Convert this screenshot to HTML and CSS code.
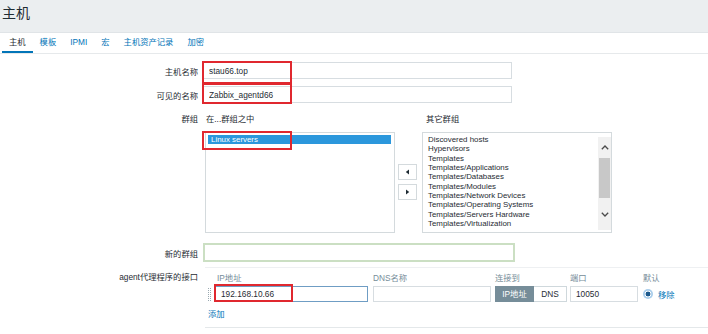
FILE: index.html
```html
<!DOCTYPE html>
<html lang="zh">
<head>
<meta charset="utf-8">
<title>主机</title>
<link rel="stylesheet" href="styles.css">
</head>
<body>
<div class="title-bar"><h1>主机</h1></div>
<nav class="tabs">
  <a class="tab active">主机</a><a class="tab">模板</a><a class="tab">IPMI</a><a class="tab">宏</a><a class="tab">主机资产记录</a><a class="tab">加密</a>
</nav>
<form class="form">
  <div class="row row-host">
    <label class="lbl">主机名称</label>
    <div class="field">
      <input class="txt w-name" type="text" value="stau66.top">
      <span class="mark mark-host"></span>
    </div>
  </div>
  <div class="row row-visible">
    <label class="lbl">可见的名称</label>
    <div class="field">
      <input class="txt w-name" type="text" value="Zabbix_agentd66">
      <span class="mark mark-visible"></span>
    </div>
  </div>
  <div class="row row-groups">
    <label class="lbl lbl-top">群组</label>
    <div class="groups">
      <div class="gcol gcol-in">
        <div class="ghead">在...群组之中</div>
        <div class="listbox">
          <div class="items">
            <div class="opt selected">Linux servers</div>
          </div>
          <span class="mark mark-group"></span>
        </div>
      </div>
      <div class="movers">
        <button type="button" class="mv"><svg width="5" height="6" viewBox="0 0 5 6"><path d="M4 0.5 L0.8 3 L4 5.5 Z" fill="#1f2c33"/></svg></button>
        <button type="button" class="mv"><svg width="5" height="6" viewBox="0 0 5 6"><path d="M1 0.5 L4.2 3 L1 5.5 Z" fill="#1f2c33"/></svg></button>
      </div>
      <div class="gcol gcol-other">
        <div class="ghead ghead-other">其它群组</div>
        <div class="listbox">
          <div class="items">
            <div class="opt">Discovered hosts</div>
            <div class="opt">Hypervisors</div>
            <div class="opt">Templates</div>
            <div class="opt">Templates/Applications</div>
            <div class="opt">Templates/Databases</div>
            <div class="opt">Templates/Modules</div>
            <div class="opt">Templates/Network Devices</div>
            <div class="opt">Templates/Operating Systems</div>
            <div class="opt">Templates/Servers Hardware</div>
            <div class="opt">Templates/Virtualization</div>
          </div>
          <div class="sbar">
            <div class="sb-up"><svg width="8" height="5" viewBox="0 0 8 5"><path d="M0.8 4.3 L4 1 L7.2 4.3" fill="none" stroke="#4a4a4a" stroke-width="1.3"/></svg></div>
            <div class="sb-thumb"></div>
            <div class="sb-down"><svg width="8" height="5" viewBox="0 0 8 5"><path d="M0.8 0.7 L4 4 L7.2 0.7" fill="none" stroke="#4a4a4a" stroke-width="1.3"/></svg></div>
          </div>
        </div>
      </div>
    </div>
  </div>
  <div class="row row-new">
    <label class="lbl">新的群组</label>
    <div class="field">
      <input class="txt newgroup" type="text" value="">
    </div>
  </div>
  <div class="row row-iface">
    <label class="lbl lbl-top lbl-iface">agent代理程序的接口</label>
    <div class="iface">
      <div class="if-head">
        <span class="c-handle"></span>
        <span class="c-ip">IP地址</span>
        <span class="c-dns">DNS名称</span>
        <span class="c-conn">连接到</span>
        <span class="c-port">端口</span>
        <span class="c-def">默认</span>
      </div>
      <div class="if-row">
        <span class="c-handle"><span class="drag"></span></span>
        <span class="c-ip field">
          <input class="txt if-input ip-input" type="text" value="192.168.10.66">
          <span class="mark mark-ip"></span>
        </span>
        <span class="c-dns"><input class="txt if-input" type="text" value=""></span>
        <span class="c-conn seg">
          <span class="seg-btn on">IP地址</span><span class="seg-btn">DNS</span>
        </span>
        <span class="c-port"><input class="txt if-input" type="text" value="10050"></span>
        <span class="c-def def-cell">
          <span class="radio"></span>
          <a class="link">移除</a>
        </span>
      </div>
      <div class="if-add"><a class="link">添加</a></div>
    </div>
  </div>
</form>
</body>
</html>
```

FILE: styles.css
```css
* { box-sizing: border-box; }

html, body {
  margin: 0;
  padding: 0;
  background: #ffffff;
}

body {
  width: 708px;
  height: 334px;
  overflow: hidden;
  font-family: "Liberation Sans", Arial, "Noto Sans CJK SC", sans-serif;
  font-size: 8.3px;
  color: #1f2c33;
}

.title-bar {
  height: 33px;
  background: #ebeef0;
  border-bottom: 1px solid #e0e4e7;
}

.title-bar h1 {
  margin: 0;
  padding: 5px 0 0 2px;
  font-size: 14px;
  line-height: 16px;
  font-weight: normal;
  color: #1f2c33;
}

.tabs {
  display: flex;
  height: 21px;
  padding-left: 2px;
  border-bottom: 1px solid #e6e9eb;
}

.tab {
  display: block;
  height: 20px;
  padding: 1px 7px 0;
  line-height: 17px;
  border-bottom: 2px solid transparent;
  color: #0275b8;
  text-decoration: none;
}

.tab.active {
  color: #1f2c33;
  border-bottom-color: #0275b8;
}

.form {
  padding-top: 8px;
}

.row {
  display: flex;
  align-items: center;
}

.row-visible { margin-top: 7px; }
.row-groups { margin-top: 9px; align-items: flex-start; }
.row-new { margin-top: 10px; }
.row-iface { margin-top: 5px; align-items: flex-start; }

.lbl {
  flex: none;
  width: 198px;
  margin-right: 5px;
  text-align: right;
  color: #1f2c33;
}

.lbl-top { line-height: 14px; }
.lbl-iface { line-height: 18px; padding-top: 1px; }

.field {
  position: relative;
  display: block;
}

.txt {
  display: block;
  margin: 0;
  height: 17px;
  padding: 0 5px;
  border: 1px solid #d7dde1;
  background: #fff;
  font-family: inherit;
  font-size: 8.3px;
  color: #1f2c33;
  outline: none;
  border-radius: 0;
}

.w-name { width: 309px; }

.newgroup {
  width: 312px;
  height: 19px;
  border: 2px solid #cbdfc3;
}

.mark {
  position: absolute;
  border: 2px solid #e0282f;
  pointer-events: none;
}

.mark-host { left: -1px; top: -1px; width: 90px; height: 23px; }
.mark-visible { left: -1px; top: -3px; width: 90px; height: 21px; }
.mark-group { left: -4px; top: -2px; width: 90px; height: 19px; }
.mark-ip { left: -1px; top: -2px; width: 79px; height: 18px; }

/* groups */
.groups {
  display: flex;
  align-items: flex-end;
}

.gcol { width: 190px; }
.gcol-in { margin-left: 2px; }

.ghead {
  line-height: 14px;
  height: 14px;
  margin-bottom: 6px;
  padding-left: 1px;
}

.ghead-other { padding-left: 4px; }

.listbox {
  position: relative;
  display: flex;
  height: 101px;
  border: 1px solid #d4dadd;
  background: #fff;
  padding: 2px 3px 2px 2px;
}

.items {
  flex: 1;
  min-width: 0;
}

.opt {
  height: 9.33px;
  line-height: 9.33px;
  padding: 0 3px;
  font-size: 7.9px;
  white-space: nowrap;
  color: #1f2c33;
}

.opt.selected {
  background: #2b97dc;
  color: #ffffff;
}

.gcol-other .listbox { padding-right: 0; }

.sbar {
  flex: none;
  width: 13px;
  margin: 2px 0 0 0;
  display: flex;
  flex-direction: column;
  background: #f1f1f1;
}

.sb-up {
  height: 21px;
  display: flex;
  align-items: center;
  justify-content: center;
}

.sb-thumb {
  height: 40px;
  margin: 0 1px;
  background: #c8c8c8;
}

.sb-down {
  flex: 1;
  display: flex;
  align-items: center;
  justify-content: center;
}

.movers {
  display: flex;
  flex-direction: column;
  gap: 4px;
  margin: 0 5px 33px 3px;
}

.mv {
  width: 19px;
  height: 16px;
  padding: 0;
  margin: 0;
  border: 1px solid #d4dadd;
  background: #ffffff;
  display: flex;
  align-items: center;
  justify-content: center;
}

/* interface */
.iface {
  flex: none;
  margin-left: 2px;
  width: 503px;
  padding: 0 0 6px 3px;
  border-top: 1px solid #eef0f2;
  border-bottom: 1px solid #e4e8ea;
}

.if-head, .if-row {
  display: flex;
  align-items: center;
}

.if-head {
  height: 18px;
  color: #768d99;
}

.if-row { height: 16px; }

.c-handle { flex: none; width: 7px; display: flex; align-items: center; }
.c-ip { flex: none; width: 153px; }
.c-dns { flex: none; width: 118px; margin-left: 5px; }
.c-conn { flex: none; width: 72px; margin-left: 4px; }
.c-port { flex: none; width: 68px; margin-left: 3px; }
.c-def { flex: none; margin-left: 5px; }

.if-head .c-ip { padding-left: 2px; }

.drag {
  display: block;
  width: 3px;
  height: 13px;
  border-left: 1px dotted #9aa9b1;
  border-right: 1px dotted #9aa9b1;
}

.if-input {
  width: 100%;
  height: 16px;
}

.ip-input { border-color: #6f9dc4; }

.seg {
  display: flex;
  height: 16px;
}

.seg-btn {
  height: 16px;
  line-height: 14px;
  border: 1px solid #cfd8dc;
  background: #fff;
  text-align: center;
  color: #1f2c33;
}

.seg-btn:first-child { width: 39px; }
.seg-btn:last-child { width: 33px; border-left: none; }

.seg-btn.on {
  background: #768d99;
  border-color: #768d99;
  color: #ffffff;
}

.def-cell {
  display: flex;
  align-items: center;
  height: 16px;
}

.radio {
  display: block;
  width: 10px;
  height: 10px;
  border-radius: 50%;
  background: radial-gradient(circle, #1c5a8e 0 2.2px, #ffffff 2.7px 3.2px, #a9cdeb 3.6px);
}

.link {
  color: #0275b8;
  text-decoration: none;
}

.def-cell .link { margin-left: 5px; }

.if-add {
  margin-top: 5px;
  line-height: 14px;
}
```
